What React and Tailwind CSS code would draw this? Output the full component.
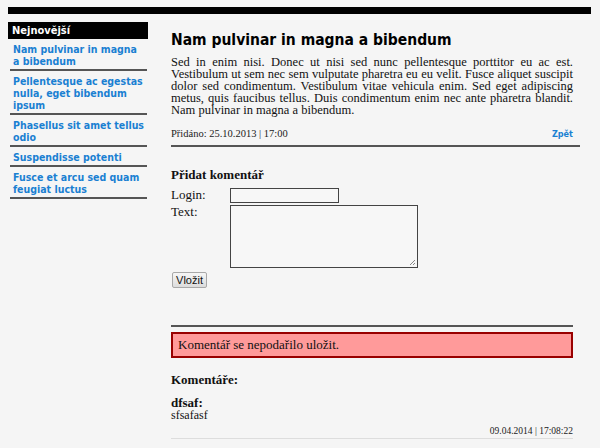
import React from "react";

const serif = "font-['Liberation_Serif',serif]";
const sans = "font-['DejaVu_Sans_Condensed','DejaVu_Sans',Tahoma,sans-serif]";

const links = [
  ["Nam pulvinar in magna", "a bibendum"],
  ["Pellentesque ac egestas", "nulla, eget bibendum", "ipsum"],
  ["Phasellus sit amet tellus", "odio"],
  ["Suspendisse potenti"],
  ["Fusce et arcu sed quam", "feugiat luctus"],
];

const para = [
  "Sed in enim nisi. Donec ut nisi sed nunc pellentesque porttitor eu ac est.",
  "Vestibulum ut sem nec sem vulputate pharetra eu eu velit. Fusce aliquet suscipit",
  "dolor sed condimentum. Vestibulum vitae vehicula enim. Sed eget adipiscing",
  "metus, quis faucibus tellus. Duis condimentum enim nec ante pharetra blandit.",
];

export default function App() {
  return (
    <div className="w-[600px] h-[448px] bg-[#f5f5f5] overflow-hidden text-[#111]">
      <div className="ml-[8px] mt-[7px] w-[583px] h-[7px] bg-black" />
      <div className="flex pl-[8px] mt-[8px]">
        <div className="w-[140px] shrink-0">
          <div className={`${sans} bg-black text-white font-bold text-[11px] leading-[17px] h-[17px] pl-[4px]`}>
            Nejnovější
          </div>
          {links.map((l, i) => (
            <div
              key={i}
              className={`${sans} ml-[2px] mr-[1px] border-b-2 border-[#555] pt-[4px] pb-[2px] pl-[3px] text-[10.5px] leading-[12px] font-bold text-[#1a80d2] whitespace-nowrap`}
            >
              {l.map((t, j) => (
                <div key={j}>{t}</div>
              ))}
            </div>
          ))}
        </div>
        <div className="ml-[23px] w-[409px] shrink-0">
          <div className="pr-[7px] border-b-2 border-[#555] pb-[5px]">
            <h1 className={`${sans} mt-[8px] font-bold text-[15.5px] leading-[20px] text-black`}>
              Nam pulvinar in magna a bibendum
            </h1>
            <div className={`${serif} mt-[6px] text-[12.5px] leading-[12px] text-[#111]`}>
              {para.map((t, i) => (
                <div key={i} className="text-justify [text-align-last:justify] whitespace-nowrap">
                  {t}
                </div>
              ))}
              <div>Nam pulvinar in magna a bibendum.</div>
            </div>
            <div className="flex justify-between items-center mt-[12px] h-[12px]">
              <span className={`${serif} text-[10.5px] leading-[12px] text-[#222]`}>
                Přidáno: 25.10.2013 | 17:00
              </span>
              <span className={`${sans} text-[9px] font-bold text-[#1a80d2] leading-[12px]`}>Zpět</span>
            </div>
          </div>
          <div className="w-[402px]">
            <div className={`${serif} mt-[21px] font-bold text-[13px] leading-[14px]`}>Přidat komentář</div>
            <div className={`${serif} mt-[6px] flex text-[13px] leading-[14px]`}>
              <span className="w-[59px]">Login:</span>
              <div className="w-[109px] h-[15px] border border-[#444] bg-[#f7f7f7]" />
            </div>
            <div className={`${serif} mt-[2px] flex text-[13px] leading-[14px]`}>
              <span className="w-[59px]">Text:</span>
              <div className="relative w-[188px] h-[63px] border border-[#444] bg-[#f7f7f7]">
                <svg className="absolute right-[1px] bottom-[1px]" width="7" height="7" viewBox="0 0 7 7">
                  <path d="M6 1 L1 6 M6 4 L4 6" stroke="#888" strokeWidth="1" />
                </svg>
              </div>
            </div>
            <div className="mt-[4px] ml-[1px] flex">
              <div className="flex items-center justify-center w-[35px] h-[16px] border border-[#a8a8a8] rounded-[2px] bg-gradient-to-b from-[#f6f6f6] to-[#dcdcdc] font-['Liberation_Sans',Arial,sans-serif] text-[11px] leading-[14px] text-[#111]">
                Vložit
              </div>
            </div>
            <div className="mt-[37px] h-[2px] bg-[#555]" />
            <div className={`${serif} mt-[5px] h-[26px] border-2 border-[#990000] bg-[#ff9a9a] pl-[5px] flex items-center text-[13px]`}>
              Komentář se nepodařilo uložit.
            </div>
            <div className={`${serif} mt-[15px] font-bold text-[13px] leading-[14px]`}>Komentáře:</div>
            <div className={`${serif} mt-[10px] text-[13px] leading-[12px]`}>
              <div className="font-bold">dfsaf:</div>
              <div className="text-[12px]">sfsafasf</div>
            </div>
            <div className={`${serif} mt-[4px] text-right text-[9.5px] leading-[12px] text-[#222] border-b border-[#ddd] pb-[1px]`}>
              09.04.2014 | 17:08:22
            </div>
          </div>
        </div>
      </div>
    </div>
  );
}
